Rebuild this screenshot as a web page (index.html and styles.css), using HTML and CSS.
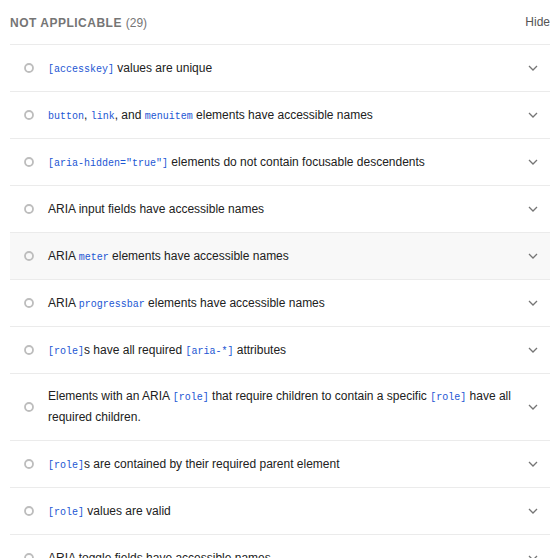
FILE: index.html
```html
<!DOCTYPE html>
<html>
<head>
<meta charset="utf-8">
<link rel="stylesheet" href="styles.css">
</head>
<body>
<div class="group">
  <div class="group-header">
    <span class="group-title">NOT APPLICABLE <span class="count">(29)</span></span>
    <span class="hide">Hide</span>
  </div>
  <div class="audit">
    <svg class="icon" width="10" height="10" viewBox="0 0 10 10"><circle cx="5" cy="5" r="4" fill="none" stroke="#bdbdbd" stroke-width="1.8"/></svg>
    <div class="title"><code>[accesskey]</code> values are unique</div>
    <svg class="chev" width="10" height="6" viewBox="0 0 10 6"><path d="M1 1 L5 5 L9 1" fill="none" stroke="#757575" stroke-width="1.3"/></svg>
  </div>
  <div class="audit">
    <svg class="icon" width="10" height="10" viewBox="0 0 10 10"><circle cx="5" cy="5" r="4" fill="none" stroke="#bdbdbd" stroke-width="1.8"/></svg>
    <div class="title"><code>button</code>, <code>link</code>, and <code>menuitem</code> elements have accessible names</div>
    <svg class="chev" width="10" height="6" viewBox="0 0 10 6"><path d="M1 1 L5 5 L9 1" fill="none" stroke="#757575" stroke-width="1.3"/></svg>
  </div>
  <div class="audit">
    <svg class="icon" width="10" height="10" viewBox="0 0 10 10"><circle cx="5" cy="5" r="4" fill="none" stroke="#bdbdbd" stroke-width="1.8"/></svg>
    <div class="title"><code>[aria-hidden="true"]</code> elements do not contain focusable descendents</div>
    <svg class="chev" width="10" height="6" viewBox="0 0 10 6"><path d="M1 1 L5 5 L9 1" fill="none" stroke="#757575" stroke-width="1.3"/></svg>
  </div>
  <div class="audit">
    <svg class="icon" width="10" height="10" viewBox="0 0 10 10"><circle cx="5" cy="5" r="4" fill="none" stroke="#bdbdbd" stroke-width="1.8"/></svg>
    <div class="title">ARIA input fields have accessible names</div>
    <svg class="chev" width="10" height="6" viewBox="0 0 10 6"><path d="M1 1 L5 5 L9 1" fill="none" stroke="#757575" stroke-width="1.3"/></svg>
  </div>
  <div class="audit hover">
    <svg class="icon" width="10" height="10" viewBox="0 0 10 10"><circle cx="5" cy="5" r="4" fill="none" stroke="#bdbdbd" stroke-width="1.8"/></svg>
    <div class="title">ARIA <code>meter</code> elements have accessible names</div>
    <svg class="chev" width="10" height="6" viewBox="0 0 10 6"><path d="M1 1 L5 5 L9 1" fill="none" stroke="#757575" stroke-width="1.3"/></svg>
  </div>
  <div class="audit">
    <svg class="icon" width="10" height="10" viewBox="0 0 10 10"><circle cx="5" cy="5" r="4" fill="none" stroke="#bdbdbd" stroke-width="1.8"/></svg>
    <div class="title">ARIA <code>progressbar</code> elements have accessible names</div>
    <svg class="chev" width="10" height="6" viewBox="0 0 10 6"><path d="M1 1 L5 5 L9 1" fill="none" stroke="#757575" stroke-width="1.3"/></svg>
  </div>
  <div class="audit">
    <svg class="icon" width="10" height="10" viewBox="0 0 10 10"><circle cx="5" cy="5" r="4" fill="none" stroke="#bdbdbd" stroke-width="1.8"/></svg>
    <div class="title"><code>[role]</code>s have all required <code>[aria-*]</code> attributes</div>
    <svg class="chev" width="10" height="6" viewBox="0 0 10 6"><path d="M1 1 L5 5 L9 1" fill="none" stroke="#757575" stroke-width="1.3"/></svg>
  </div>
  <div class="audit">
    <svg class="icon" width="10" height="10" viewBox="0 0 10 10"><circle cx="5" cy="5" r="4" fill="none" stroke="#bdbdbd" stroke-width="1.8"/></svg>
    <div class="title">Elements with an ARIA <code>[role]</code> that require children to contain a specific <code>[role]</code> have all required children.</div>
    <svg class="chev" width="10" height="6" viewBox="0 0 10 6"><path d="M1 1 L5 5 L9 1" fill="none" stroke="#757575" stroke-width="1.3"/></svg>
  </div>
  <div class="audit">
    <svg class="icon" width="10" height="10" viewBox="0 0 10 10"><circle cx="5" cy="5" r="4" fill="none" stroke="#bdbdbd" stroke-width="1.8"/></svg>
    <div class="title"><code>[role]</code>s are contained by their required parent element</div>
    <svg class="chev" width="10" height="6" viewBox="0 0 10 6"><path d="M1 1 L5 5 L9 1" fill="none" stroke="#757575" stroke-width="1.3"/></svg>
  </div>
  <div class="audit">
    <svg class="icon" width="10" height="10" viewBox="0 0 10 10"><circle cx="5" cy="5" r="4" fill="none" stroke="#bdbdbd" stroke-width="1.8"/></svg>
    <div class="title"><code>[role]</code> values are valid</div>
    <svg class="chev" width="10" height="6" viewBox="0 0 10 6"><path d="M1 1 L5 5 L9 1" fill="none" stroke="#757575" stroke-width="1.3"/></svg>
  </div>
  <div class="audit">
    <svg class="icon" width="10" height="10" viewBox="0 0 10 10"><circle cx="5" cy="5" r="4" fill="none" stroke="#bdbdbd" stroke-width="1.8"/></svg>
    <div class="title">ARIA toggle fields have accessible names</div>
    <svg class="chev" width="10" height="6" viewBox="0 0 10 6"><path d="M1 1 L5 5 L9 1" fill="none" stroke="#757575" stroke-width="1.3"/></svg>
  </div>
</div>
</body>
</html>
```
FILE: styles.css
```css
html, body {
  margin: 0;
  padding: 0;
  background: #fff;
}
body {
  font-family: "Liberation Sans", Arial, sans-serif;
  font-size: 12px;
  color: #212121;
}
.group {
  padding: 0 10px;
}
.group-header {
  display: flex;
  align-items: center;
  justify-content: space-between;
  height: 44px;
  border-bottom: 1px solid #ebebeb;
}
.group-title {
  font-weight: bold;
  color: #757575;
  letter-spacing: 0.5px;
  padding-top: 1px;
}
.count {
  font-weight: normal;
  letter-spacing: 0;
}
.hide {
  color: #555;
}
.audit {
  display: flex;
  align-items: center;
  min-height: 22px;
  padding: 12px 12px 12px 14px;
  border-bottom: 1px solid #ebebeb;
  line-height: 21px;
}
.audit.hover {
  background: #f8f8f8;
}
.icon {
  flex: none;
  margin-right: 14px;
}
.title {
  flex: 1;
  margin-right: 10px;
}
.title code {
  font-family: "Liberation Mono", "Courier New", monospace;
  font-size: 10px;
  line-height: 10px;
  color: #1c56d3;
}
.chev {
  flex: none;
}
```
